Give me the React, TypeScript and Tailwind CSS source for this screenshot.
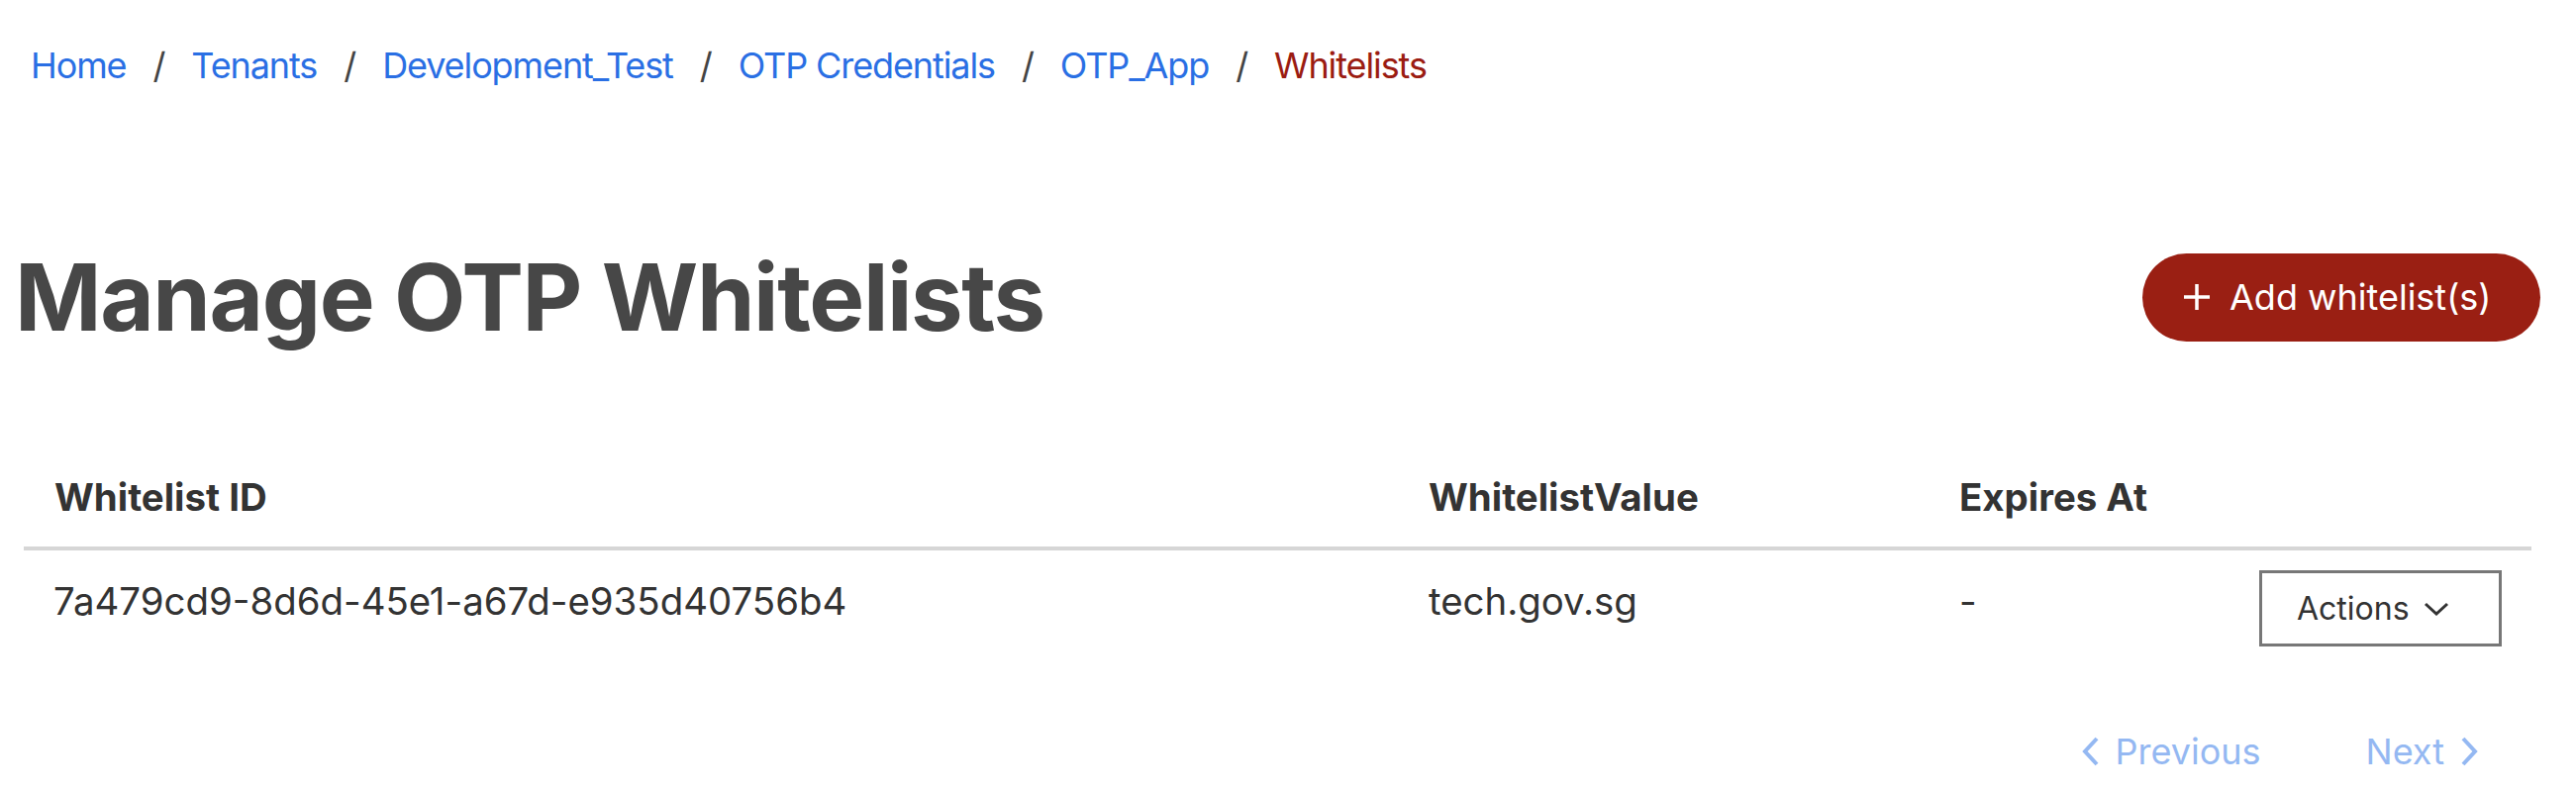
import React from 'react';

const crumbs = ['Home', 'Tenants', 'Development_Test', 'OTP Credentials', 'OTP_App'];

const Slash = () => <span className="mx-[27px] text-[#444444]">/</span>;

const App: React.FC = () => {
  return (
    <div className="w-[2602px] h-[802px] bg-white overflow-hidden font-['Inter','Noto_Sans',sans-serif]">
      {/* breadcrumb */}
      <nav className="flex items-center pl-[31px] pt-[39px] text-[36px] leading-[54px] tracking-[-1.1px]">
        {crumbs.map((c) => (
          <React.Fragment key={c}>
            <a className="text-[#2a6fe4]">{c}</a>
            <Slash />
          </React.Fragment>
        ))}
        <span className="text-[#9b1c12]">Whitelists</span>
      </nav>

      {/* title row */}
      <div className="flex items-center justify-between h-[120px] mt-[147px] pl-[15px] pr-[36px]">
        <h1 className="text-[94px] font-bold text-[#474747] tracking-[-1.4px] leading-none">
          Manage OTP Whitelists
        </h1>
        <button className="flex items-center h-[89px] w-[402px] rounded-full bg-[#9a1f13] text-white text-[36px] pl-[42px]">
          <svg width="26" height="26" viewBox="0 0 26 26" className="mr-[20px]">
            <path d="M13 0v26M0 13h26" stroke="white" strokeWidth="3.5" />
          </svg>
          <span>Add whitelist(s)</span>
        </button>
      </div>

      {/* table */}
      <div className="ml-[24px] w-[2533px] mt-[94px] text-[38.4px] leading-[54px] text-[#333333]">
        <div className="grid grid-cols-[1387px_536px_303px_1fr] border-b-[4px] border-[#d6d6d6] font-bold">
          <div className="pl-[31px] pt-[21px] pb-[23px]">Whitelist ID</div>
          <div className="pl-[32px] pt-[21px] pb-[23px]">WhitelistValue</div>
          <div className="pl-[32px] pt-[21px] pb-[23px]">Expires At</div>
          <div />
        </div>
        <div className="grid grid-cols-[1387px_536px_303px_1fr] items-start">
          <div className="pl-[30px] pt-[24px]">7a479cd9-8d6d-45e1-a67d-e935d40756b4</div>
          <div className="pl-[32px] pt-[24px]">tech.gov.sg</div>
          <div className="pl-[32px] pt-[24px]">-</div>
          <div className="pl-[32px] py-[20px]">
            <button className="flex items-center w-[245px] h-[77px] border-[3px] border-[#777777] text-[32px] text-[#333333] pl-[35px]">
              <span>Actions</span>
              <svg width="26" height="14" viewBox="0 0 26 14" className="ml-[14px]">
                <polyline points="2,2 13,12 24,2" fill="none" stroke="#333333" strokeWidth="3" />
              </svg>
            </button>
          </div>
        </div>
      </div>

      {/* pagination */}
      <div className="flex justify-end items-center pr-[99px] mt-[59px] text-[36px] leading-[54px] text-[#94b8f2]">
        <button className="flex items-center">
          <svg width="18" height="30" viewBox="0 0 18 30" className="mr-[16px]">
            <polyline points="15,2 3,15 15,28" fill="none" stroke="#94b8f2" strokeWidth="4" />
          </svg>
          Previous
        </button>
        <button className="flex items-center ml-[106px]">
          Next
          <svg width="18" height="30" viewBox="0 0 18 30" className="ml-[16px]">
            <polyline points="3,2 15,15 3,28" fill="none" stroke="#94b8f2" strokeWidth="4" />
          </svg>
        </button>
      </div>
    </div>
  );
};

export default App;
